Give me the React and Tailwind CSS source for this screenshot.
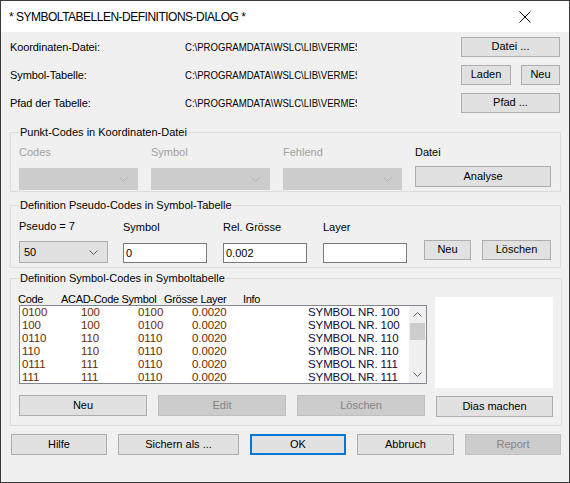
const rows = [
  ["0100", "100", "0100", "0.0020", "SYMBOL NR. 100"],
  ["100", "100", "0100", "0.0020", "SYMBOL NR. 100"],
  ["0110", "110", "0110", "0.0020", "SYMBOL NR. 110"],
  ["110", "110", "0110", "0.0020", "SYMBOL NR. 110"],
  ["0111", "111", "0110", "0.0020", "SYMBOL NR. 111"],
  ["111", "111", "0110", "0.0020", "SYMBOL NR. 111"],
];

function Chevron({ up, color = "#606060" }) {
  return (
    <svg width="9" height="5" viewBox="0 0 9 5" className="block">
      <path d={up ? "M0.5 4.5 L4.5 0.5 L8.5 4.5" : "M0.5 0.5 L4.5 4.5 L8.5 0.5"} stroke={color} strokeWidth="1" fill="none" />
    </svg>
  );
}

function Btn({ children, disabled, className = "" }) {
  return (
    <button
      type="button"
      className={`flex items-center justify-center border pb-[1px] ${
        disabled ? "border-[#bfbfbf] bg-[#cccccc] text-[#838383]" : "border-[#adadad] bg-[#e1e1e1] text-black"
      } ${className}`}
    >
      {children}
    </button>
  );
}

function Combo({ value, disabled, className = "" }) {
  return (
    <div
      className={`flex items-center justify-between border pl-[4px] pr-[9px] ${
        disabled ? "border-[#cccccc] bg-[#cccccc]" : "border-[#adadad] bg-[#e1e1e1]"
      } ${className}`}
    >
      <span>{value}</span>
      <Chevron color={disabled ? "#b3b3b3" : "#606060"} />
    </div>
  );
}

function Input({ value, className = "" }) {
  return (
    <div className={`flex items-center border border-[#7a7a7a] bg-white pl-[2px] ${className}`}>{value}</div>
  );
}

function Group({ title, className = "", children }) {
  return (
    <fieldset className={`border border-[#dcdcdc] px-[8px] ${className}`}>
      <legend className="px-[1px] leading-[13px]">{title}</legend>
      {children}
    </fieldset>
  );
}

export default function App() {
  return (
    <div className="flex h-[483px] w-[570px] flex-col overflow-hidden border border-[#3a3a3a] bg-[#f0f0f0] font-['Liberation_Sans',Arial,sans-serif] text-[11px] text-black">
      {/* title bar */}
      <div className="flex h-[31px] shrink-0 items-center justify-between bg-white pl-[8px] pr-[38px]">
        <span className="text-[12px] tracking-[-0.5px]">* SYMBOLTABELLEN-DEFINITIONS-DIALOG *</span>
        <svg width="12" height="12" viewBox="0 0 12 12">
          <path d="M0.5 0.5 L11.5 11.5 M11.5 0.5 L0.5 11.5" stroke="#000" strokeWidth="1" />
        </svg>
      </div>

      <div className="flex flex-1 flex-col pl-[9px] pr-[8px]">
        {/* file rows */}
        <div className="mt-[5px] flex flex-col gap-[8px]">
          {[
            ["Koordinaten-Datei:", "file"],
            ["Symbol-Tabelle:", "table"],
            ["Pfad der Tabelle:", "path"],
          ].map(([label, kind]) => (
            <div key={kind} className="flex h-[20px] items-center">
              <span className="w-[175px] shrink-0 tracking-[-0.1px]">{label}</span>
              <span className="w-[172px] shrink-0 overflow-hidden whitespace-nowrap">
                <span className="inline-block origin-left scale-x-[0.87]">C:\PROGRAMDATA\WSLC\LIB\VERMESSUNG\SYMBOLE.TAB</span>
              </span>
              <div className="ml-auto mr-[1px] flex w-[99px] gap-[10px]">
                {kind === "file" && <Btn className="h-[20px] w-full">Datei ...</Btn>}
                {kind === "table" && (
                  <>
                    <Btn className="h-[20px] w-[50px]">Laden</Btn>
                    <Btn className="h-[20px] w-[39px]">Neu</Btn>
                  </>
                )}
                {kind === "path" && <Btn className="h-[20px] w-full">Pfad ...</Btn>}
              </div>
            </div>
          ))}
        </div>

        {/* Punkt-Codes */}
        <Group title="Punkt-Codes in Koordinaten-Datei" className="mt-[13px] pb-[1px]">
          <div className="mt-[7px] flex gap-[13px]">
            {["Codes", "Symbol", "Fehlend"].map((l) => (
              <div key={l} className="flex w-[119px] flex-col">
                <span className="leading-[13px] text-[#a0a0a0]">{l}</span>
                <Combo disabled className="mt-[9px] h-[22px]" />
              </div>
            ))}
            <div className="flex flex-col">
              <span className="leading-[13px]">Datei</span>
              <Btn className="mt-[7px] h-[21px] w-[136px]">Analyse</Btn>
            </div>
          </div>
        </Group>

        {/* Pseudo-Codes */}
        <Group title="Definition Pseudo-Codes in Symbol-Tabelle" className="mt-[7px] pb-[4px]">
          <div className="mt-[8px] flex items-end">
            <div className="flex w-[104px] flex-col">
              <span className="leading-[13px]">Pseudo = 7</span>
              <Combo value="50" className="mt-[8px] h-[22px] w-[89px]" />
            </div>
            {[
              ["Symbol", "0"],
              ["Rel. Grösse", "0.002"],
              ["Layer", ""],
            ].map(([l, v]) => (
              <div key={l} className="flex w-[100px] flex-col">
                <span className="leading-[13px]">{l}</span>
                <Input value={v} className="mt-[9px] h-[20px] w-[84px]" />
              </div>
            ))}
            <div className="mb-[3px] ml-[1px] flex gap-[11px]">
              <Btn className="h-[20px] w-[47px]">Neu</Btn>
              <Btn className="h-[20px] w-[69px]">Löschen</Btn>
            </div>
          </div>
        </Group>

        {/* Symbol-Codes */}
        <Group title="Definition Symbol-Codes in Symboltabelle" className="mt-[4px] pb-[8px]">
          <div className="mt-[8px] flex">
            <div className="flex w-[408px] flex-col">
              <div className="flex h-[12px] items-center whitespace-nowrap text-[11px] leading-[12px] tracking-[-0.3px]">
                <span className="-ml-[1px] w-[43px]">Code</span>
                <span className="w-[103px]">ACAD-Code Symbol</span>
                <span className="w-[79px]">Grösse Layer</span>
                <span>Info</span>
              </div>
              <div className="flex h-[79px] border border-[#828790] bg-white">
                <div className="flex flex-1 flex-col pl-[2px] text-[11.5px] leading-[13px] tracking-[-0.1px]">
                  {rows.map((r, i) => (
                    <div key={i} className="flex h-[13px] whitespace-nowrap">
                      <span className="w-[59px] text-[#6b2a00]">{r[0]}</span>
                      <span className="w-[57px] text-[#6b2a00]">{r[1]}</span>
                      <span className="w-[54px] text-[#6b2a00]">{r[2]}</span>
                      <span className="w-[116px] text-[#6b2a00]">{r[3]}</span>
                      <span className="text-[#0a0a40]">{r[4]}</span>
                    </div>
                  ))}
                </div>
                <div className="flex w-[17px] flex-col items-center bg-[#f0f0f0]">
                  <div className="flex h-[17px] items-center">
                    <Chevron up />
                  </div>
                  <div className="h-[17px] w-[15px] bg-[#cdcdcd]" />
                  <div className="flex-1" />
                  <div className="flex h-[17px] items-center">
                    <Chevron />
                  </div>
                </div>
              </div>
              <div className="mt-[11px] flex gap-[11px]">
                <Btn className="h-[21px] w-[128px]">Neu</Btn>
                <Btn disabled className="h-[21px] w-[128px]">Edit</Btn>
                <Btn disabled className="h-[21px] w-[128px]">Löschen</Btn>
              </div>
            </div>
            <div className="ml-[8px] flex flex-col">
              <div className="mt-[4px] h-[91px] w-[118px] bg-white" />
              <Btn className="ml-[1px] mt-[8px] h-[21px] w-[117px]">Dias machen</Btn>
            </div>
          </div>
        </Group>

        {/* footer */}
        <div className="mt-[8px] flex gap-[11px] pl-[1px]">
          <Btn className="h-[21px] w-[96px]">Hilfe</Btn>
          <Btn className="h-[21px] w-[121px]">Sichern als ...</Btn>
          <Btn className="h-[21px] w-[96px] border-2 !border-[#0078d7]">OK</Btn>
          <Btn className="h-[21px] w-[97px]">Abbruch</Btn>
          <Btn disabled className="h-[21px] w-[96px]">Report</Btn>
        </div>
      </div>
    </div>
  );
}
